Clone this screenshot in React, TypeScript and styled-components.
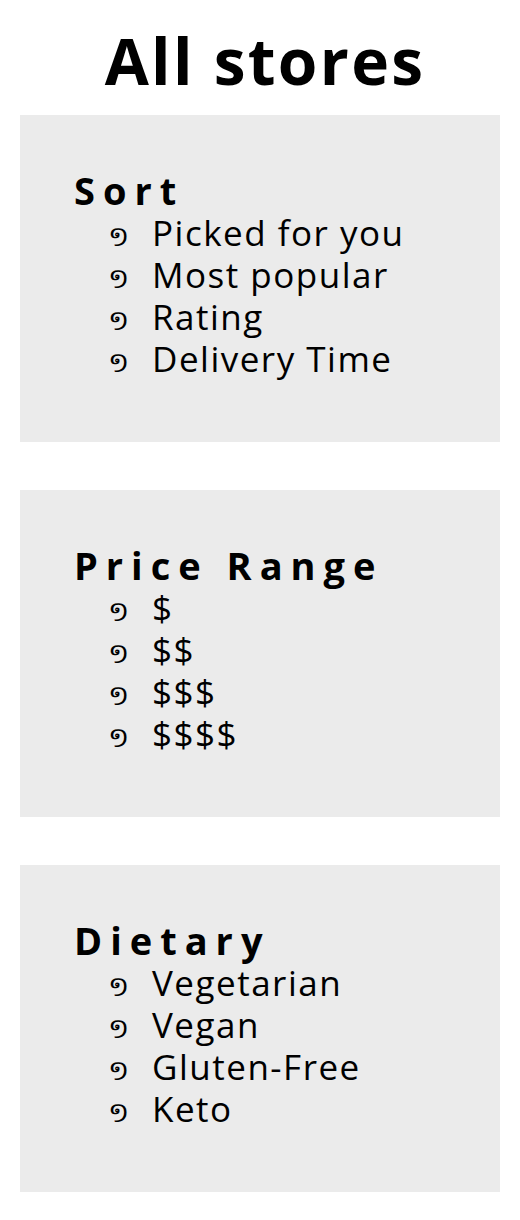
import React from "react";
import styled, { createGlobalStyle } from "styled-components";

const GlobalStyle = createGlobalStyle`
  body {
    margin: 0;
    background: #ffffff;
    color: #000000;
    font-family: "Open Sans", "DejaVu Sans", sans-serif;
  }
`;

const Page = styled.main`
  display: flex;
  flex-direction: column;
  align-items: center;
  padding: 17px 20px 28px;
`;

const Title = styled.h1`
  margin: 0 0 11px;
  padding-left: 10px;
  font-size: 64px;
  font-weight: 700;
  line-height: normal;
  letter-spacing: 2.3px;
`;

const Panels = styled.div`
  align-self: stretch;
  display: flex;
  flex-direction: column;
  gap: 48px;
`;

const Panel = styled.section`
  background: #ebebeb;
  padding: 54px 53px 62px;
`;

const Heading = styled.h2`
  margin: 0 0 1px;
  padding-left: 1px;
  font-size: 38px;
  font-weight: 700;
  line-height: 42px;
  letter-spacing: 8px;
`;

const Options = styled.ul`
  list-style: none;
  margin: 0;
  padding: 0 0 0 35px;
  display: flex;
  flex-direction: column;
`;

const Option = styled.li`
  display: flex;
  align-items: baseline;
  height: 42px;
  font-size: 35px;
  line-height: 42px;
  letter-spacing: 1.5px;
`;

const Bullet = styled.span`
  flex: 0 0 44px;
  font-size: 28px;
  font-weight: 300;
  line-height: 16px;
  letter-spacing: 0;
`;

const sections = [
  { title: "Sort", items: ["Picked for you", "Most popular", "Rating", "Delivery Time"] },
  { title: "Price Range", items: ["$", "$$", "$$$", "$$$$"] },
  { title: "Dietary", items: ["Vegetarian", "Vegan", "Gluten-Free", "Keto"] },
];

export default function App() {
  return (
    <>
      <GlobalStyle />
      <Page>
        <Title>All stores</Title>
        <Panels>
          {sections.map((s) => (
            <Panel key={s.title}>
              <Heading>{s.title}</Heading>
              <Options>
                {s.items.map((it) => (
                  <Option key={it}>
                    <Bullet aria-hidden="true">១</Bullet>
                    {it}
                  </Option>
                ))}
              </Options>
            </Panel>
          ))}
        </Panels>
      </Page>
    </>
  );
}
